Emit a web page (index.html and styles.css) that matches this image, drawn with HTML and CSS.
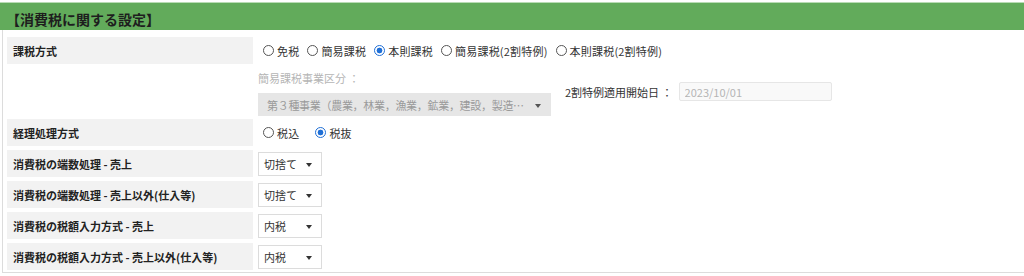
FILE: index.html
```html
<!DOCTYPE html>
<html lang="ja">
<head>
    <meta charset="UTF-8">
    <title>消費税に関する設定</title>
    <link rel="stylesheet" href="styles.css">
</head>
<body>
    <div class="settings">
        <div class="settings-title">【消費税に関する設定】</div>
        <div class="settings-body">
            <div class="row">
                <div class="label">課税方式</div>
                <div class="value">
                    <label class="radio"><input type="radio" name="method">免税</label>
                    <label class="radio"><input type="radio" name="method">簡易課税</label>
                    <label class="radio"><input type="radio" name="method" checked>本則課税</label>
                    <label class="radio"><input type="radio" name="method">簡易課税(2割特例)</label>
                    <label class="radio"><input type="radio" name="method">本則課税(2割特例)</label>
                </div>
            </div>
            <div class="row row-tall">
                <div class="label blank"></div>
                <div class="value sub">
                    <div class="sub-col">
                        <div class="sub-label">簡易課税事業区分 ：</div>
                        <div class="select select-wide disabled"><span>第３種事業（農業，林業，漁業，鉱業，建設，製造…</span></div>
                    </div>
                    <div class="date-field">
                        <span>2割特例適用開始日 ：</span>
                        <input type="text" value="2023/10/01" disabled>
                    </div>
                </div>
            </div>
            <div class="row">
                <div class="label">経理処理方式</div>
                <div class="value">
                    <label class="radio"><input type="radio" name="acct">税込</label>
                    <label class="radio radio-far"><input type="radio" name="acct" checked>税抜</label>
                </div>
            </div>
            <div class="row">
                <div class="label">消費税の端数処理 - 売上</div>
                <div class="value plain"><div class="select"><span>切捨て</span></div></div>
            </div>
            <div class="row">
                <div class="label">消費税の端数処理 - 売上以外(仕入等)</div>
                <div class="value plain"><div class="select"><span>切捨て</span></div></div>
            </div>
            <div class="row">
                <div class="label">消費税の税額入力方式 - 売上</div>
                <div class="value plain"><div class="select"><span>内税</span></div></div>
            </div>
            <div class="row">
                <div class="label">消費税の税額入力方式 - 売上以外(仕入等)</div>
                <div class="value plain"><div class="select"><span>内税</span></div></div>
            </div>
        </div>
    </div>
</body>
</html>
```
FILE: styles.css
```css
body {
    margin: 0;
    padding-top: 2px;
    font-family: "Noto Sans CJK JP", "Noto Sans", sans-serif;
    font-size: 11px;
    color: #333;
    background: #fff;
}
.settings-title {
    background-color: #62ab5b;
    border-top: 1px solid #b9dcb5;
    height: 28px;
    box-sizing: border-box;
    padding: 8px 0 0 6px;
    font-size: 14px;
    line-height: 16px;
    font-weight: bold;
    color: #1e1e1e;
}
.settings-body {
    margin-left: 2px;
    border-left: 1px solid #dcdcdc;
    border-bottom: 1px solid #dcdcdc;
    padding: 7px 4px 2px 4px;
    display: flex;
    flex-direction: column;
    gap: 4px;
}
.row {
    display: grid;
    grid-template-columns: 246px 1fr;
    column-gap: 5px;
    height: 27px;
}
.row-tall {
    height: 47px;
}
.label {
    background: #f2f2f2;
    font-weight: bold;
    color: #222;
    display: flex;
    align-items: center;
    padding-left: 6px;
}
.label.blank {
    background: none;
}
.value {
    display: flex;
    align-items: center;
    padding-left: 5px;
}
.value.plain {
    padding-left: 0;
}
.radio {
    display: flex;
    align-items: center;
    margin-right: 8px;
    letter-spacing: 0.2px;
}
.radio-far {
    margin-left: 8px;
}
.radio input {
    appearance: none;
    width: 11px;
    height: 11px;
    margin: 0 3px 0 0;
    border: 1px solid #555;
    border-radius: 50%;
    box-sizing: border-box;
}
.radio input:checked {
    border-color: #1f6fd6;
    background: radial-gradient(circle, #1f6fd6 0 2.6px, #fff 3.2px);
}
.value.sub {
    padding-left: 0;
    align-items: flex-start;
    gap: 14px;
}
.sub-col {
    display: flex;
    flex-direction: column;
    gap: 9px;
    padding-top: 5px;
}
.sub-label {
    color: #b5b5b5;
    line-height: 11px;
}
.select {
    width: 64px;
    height: 24px;
    box-sizing: border-box;
    border: 1px solid #dcdcdc;
    background: #fff;
    display: flex;
    align-items: center;
    padding: 0 20px 0 5px;
    position: relative;
    color: #333;
}
.select span {
    white-space: nowrap;
}
.select::after {
    content: "";
    position: absolute;
    right: 9px;
    top: 10px;
    border-left: 3px solid transparent;
    border-right: 3px solid transparent;
    border-top: 4px solid #333;
}
.select-wide {
    width: 293px;
    height: 23px;
    padding-left: 8px;
    letter-spacing: -0.3px;
}
.select.disabled {
    background: #e6e6e6;
    border-color: #e6e6e6;
    color: #9a9a9a;
}
.select.disabled::after {
    border-top-color: #555;
}
.date-field {
    display: flex;
    align-items: center;
    gap: 6px;
    margin-top: 14px;
    color: #333;
}
.date-field input {
    width: 153px;
    height: 19px;
    box-sizing: border-box;
    border: 1px solid #e6e6e6;
    border-radius: 2px;
    background: #f9f9f9;
    font: inherit;
    color: #b5b5b5;
    padding: 0 5px;
}
```
